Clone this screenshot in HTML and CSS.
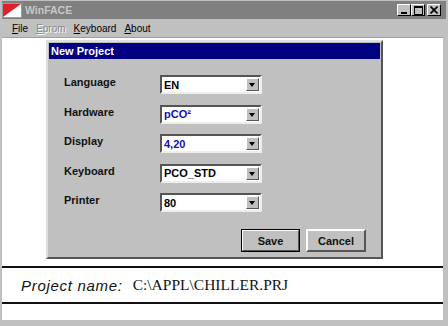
FILE: index.html
```html
<!DOCTYPE html>
<html lang="en">
<head>
    <meta charset="UTF-8">
    <title>WinFACE</title>
    <link rel="stylesheet" href="styles.css">
</head>
<body>
    <div class="janela">
        <div class="titulo">
            <svg class="icone" width="20" height="15" viewBox="0 0 20 15">
                <rect x="0.5" y="0.5" width="19" height="14" fill="#fff" stroke="#9a9a9a"/>
                <polygon points="1,1 19,1 1,14" fill="#e0202a"/>
            </svg>
            <span class="titulo-texto">WinFACE</span>
            <div class="botoes-janela">
                <span class="btn-janela"><svg width="8" height="8" viewBox="0 0 8 8"><rect x="1" y="6" width="6" height="2" fill="#000"/></svg></span>
                <span class="btn-janela"><svg width="9" height="9" viewBox="0 0 9 9"><rect x="0.5" y="0.5" width="8" height="8" fill="none" stroke="#000"/><rect x="0" y="0" width="9" height="2" fill="#000"/></svg></span>
                <span class="btn-janela fechar"><svg width="8" height="8" viewBox="0 0 8 8"><path d="M0.5 0.5 L7.5 7.5 M7.5 0.5 L0.5 7.5" stroke="#000" stroke-width="1.6"/></svg></span>
            </div>
        </div>
        <div class="menu">
            <span><u>F</u>ile</span>
            <span class="desativado"><u>E</u>prom</span>
            <span><u>K</u>eyboard</span>
            <span><u>A</u>bout</span>
        </div>
        <div class="area">
            <div class="dialogo">
                <div class="dialogo-titulo">New Project</div>
                <div class="campos">
                    <label>Language</label>
                    <div class="combo"><span>EN</span><i class="seta"></i></div>
                    <label>Hardware</label>
                    <div class="combo azul"><span>pCO²</span><i class="seta"></i></div>
                    <label>Display</label>
                    <div class="combo azul"><span>4,20</span><i class="seta"></i></div>
                    <label>Keyboard</label>
                    <div class="combo"><span>PCO_STD</span><i class="seta"></i></div>
                    <label>Printer</label>
                    <div class="combo"><span>80</span><i class="seta"></i></div>
                </div>
                <div class="acoes">
                    <button class="btn padrao">Save</button>
                    <button class="btn">Cancel</button>
                </div>
            </div>
            <div class="projeto">
                <span class="projeto-rotulo">Project name:</span>
                <span class="projeto-caminho">C:\APPL\CHILLER.PRJ</span>
            </div>
        </div>
    </div>
</body>
</html>
```
FILE: styles.css
```css
body {
    margin: 0;
    font-family: "Liberation Sans", Arial, sans-serif;
    background: #fff;
}

.janela {
    width: 448px;
    height: 326px;
    box-sizing: border-box;
    background: #c0c0c0;
    padding: 1px 5px 6px 2px;
    display: flex;
    flex-direction: column;
}

/* barra de titulo (inativa) */
.titulo {
    height: 18px;
    background: #808080;
    display: flex;
    align-items: center;
    margin-right: -3px;
}

.icone {
    flex: none;
}

.titulo-texto {
    color: #c8c8c8;
    font-weight: bold;
    font-size: 10.5px;
    margin-left: 3px;
}

.botoes-janela {
    margin-left: auto;
    margin-right: 5px;
    display: flex;
}

.btn-janela {
    width: 14px;
    height: 12px;
    box-sizing: border-box;
    background: #c0c0c0;
    border: 1px solid;
    border-color: #fff #000 #000 #fff;
    display: flex;
    align-items: center;
    justify-content: center;
}

.btn-janela.fechar {
    margin-left: 2px;
}

.menu {
    height: 18px;
    display: flex;
    align-items: center;
    font-size: 10px;
    padding-left: 10px;
    gap: 8px;
}

.menu .desativado {
    color: #8a8a8a;
    text-shadow: 1px 1px 0 #fff;
}

.area {
    flex: 1;
    background: #fff;
    border-top: 1px solid #a0a0a0;
    display: flex;
    flex-direction: column;
}

.dialogo {
    margin: 2px 0 0 44px;
    width: 337px;
    height: 219px;
    box-sizing: border-box;
    background: #c0c0c0;
    border: 2px solid;
    border-color: #dfdfdf #555 #555 #dfdfdf;
    padding: 1px;
    display: flex;
    flex-direction: column;
}

.dialogo-titulo {
    height: 16px;
    background: #000080;
    color: #fff;
    font-weight: bold;
    font-size: 11px;
    line-height: 16px;
    padding-left: 2px;
}

.campos {
    display: grid;
    grid-template-columns: 96px 102px;
    grid-auto-rows: 19px;
    row-gap: 10.5px;
    margin: 16px 0 0 15px;
}

.campos label {
    font-weight: bold;
    font-size: 11px;
    line-height: 15px;
    color: #111;
}

.combo {
    background: #fff;
    border: 2px solid;
    border-color: #555 #eee #eee #555;
    box-sizing: border-box;
    display: flex;
    align-items: center;
    font-weight: bold;
    font-size: 11px;
    padding-left: 2px;
    color: #000;
}

.combo.azul {
    color: #1010b0;
}

.combo .seta {
    margin-left: auto;
    margin-right: 1px;
    width: 13px;
    height: 13px;
    box-sizing: border-box;
    background: #c0c0c0;
    border: 1px solid;
    border-color: #fff #555 #555 #fff;
    position: relative;
}

.combo .seta::after {
    content: "";
    position: absolute;
    left: 2px;
    top: 4px;
    border-left: 3.5px solid transparent;
    border-right: 3.5px solid transparent;
    border-top: 4px solid #000;
}

.acoes {
    display: flex;
    justify-content: flex-end;
    gap: 6px;
    margin: 17px 14px 0 0;
}

.btn {
    width: 60px;
    height: 23px;
    background: #c0c0c0;
    border: 2px solid;
    border-color: #fff #555 #555 #fff;
    font-family: "Liberation Sans", Arial, sans-serif;
    font-weight: bold;
    font-size: 11px;
    color: #111;
    padding: 0;
}

.btn.padrao {
    width: 59px;
    outline: 1px solid #000;
    outline-offset: -1px;
}

.projeto {
    margin-top: 7px;
    height: 34px;
    border-top: 2px solid #111;
    border-bottom: 2px solid #111;
    display: flex;
    align-items: center;
    padding-left: 19px;
}

.projeto-rotulo {
    font-style: italic;
    font-size: 15px;
    letter-spacing: 0.7px;
    color: #111;
}

.projeto-caminho {
    font-family: "Liberation Serif", "Times New Roman", serif;
    font-size: 15.5px;
    margin-left: 10px;
    color: #111;
}
```
